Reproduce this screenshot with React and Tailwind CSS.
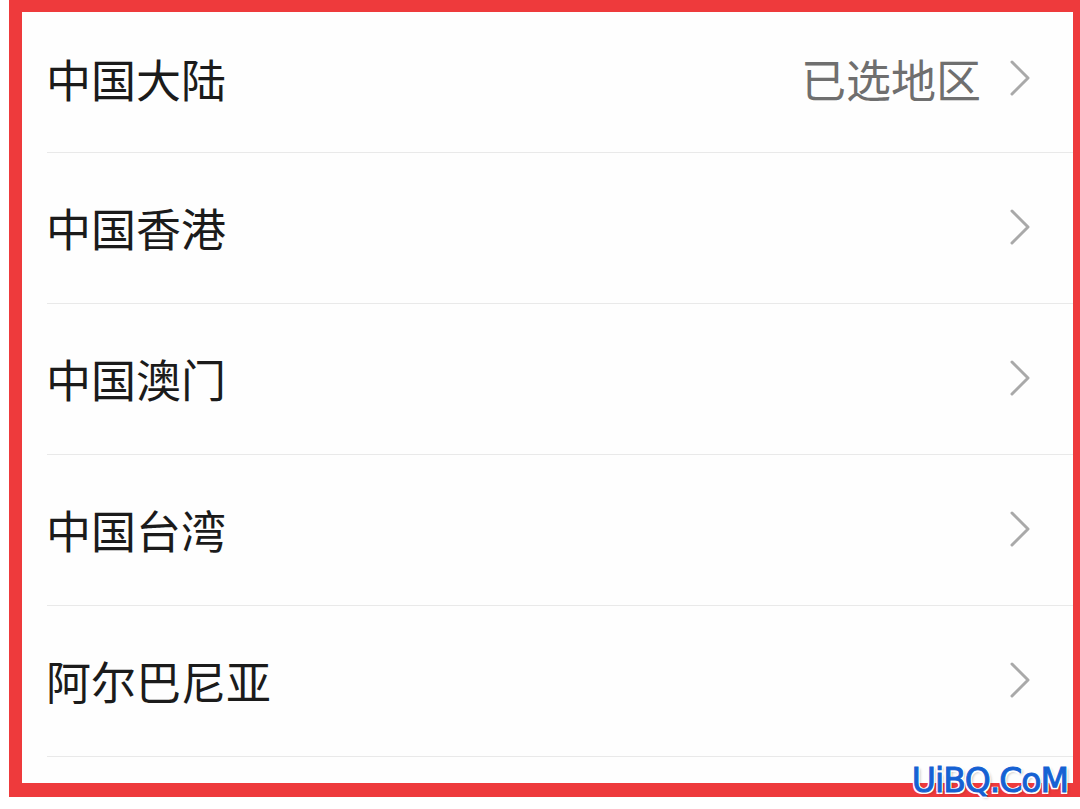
const ROWS = [
  { name: "中国大陆", note: "已选地区" },
  { name: "中国香港" },
  { name: "中国澳门" },
  { name: "中国台湾" },
  { name: "阿尔巴尼亚" },
];

function Chevron() {
  return (
    <svg width="22" height="36" viewBox="0 0 22 36" fill="none" className="shrink-0">
      <path d="M3 2L19 18L3 34" stroke="#a9a9a9" strokeWidth="3" strokeLinecap="round" strokeLinejoin="round" />
    </svg>
  );
}

export default function App() {
  return (
    <div
      className="relative h-[809px] w-[1080px] overflow-hidden bg-white"
      style={{ fontFamily: '"Noto Sans CJK SC", "Noto Sans", sans-serif' }}
    >
      <div className="ml-[9px] h-[797px] w-[1071px] border-l-[13px] border-t-[12px] border-r-[7px] border-b-[14px] border-[#ee3a3c] bg-[#fefefe]">
        <div className="flex flex-col pl-[25px]">
          {ROWS.map((r, i) => (
            <div
              key={r.name}
              className={`flex items-center justify-between border-b border-[#e9e9e9] pr-[42px] ${i === 0 ? "h-[141px] pb-[8px]" : "h-[151px] pb-[2px]"}`}
            >
              <span className="-ml-[1px] text-[45px] leading-none text-[#1b1b1b]">{r.name}</span>
              <div className="flex items-center gap-[28px]">
                {r.note && <span className="text-[45px] leading-none text-[#6f6f6f]">{r.note}</span>}
                <Chevron />
              </div>
            </div>
          ))}
        </div>
      </div>
      <div
        className="absolute right-[12px] bottom-[12px] text-[33px] leading-none tracking-[-1px] text-[#1561d3] [-webkit-text-stroke:1px_#1561d3] [text-shadow:1.5px_1.5px_0_#fff,-1.5px_-1.5px_0_#fff,1.5px_-1.5px_0_#fff,-1.5px_1.5px_0_#fff,2px_2px_3px_rgba(0,0,0,0.3)]"
        style={{ fontFamily: '"DejaVu Sans", sans-serif' }}
      >
        UiBQ.CoM
      </div>
    </div>
  );
}
